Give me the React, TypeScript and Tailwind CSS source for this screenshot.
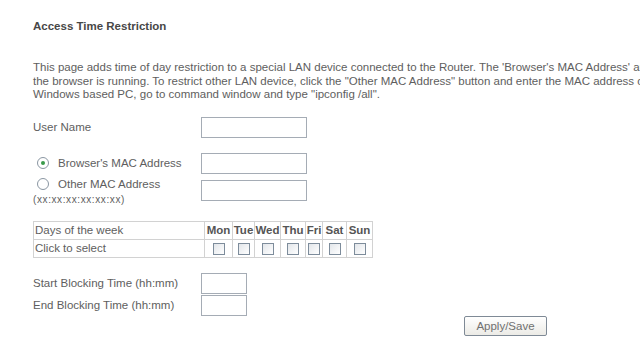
export default function App() {
  const days: [string, number][] = [
    ['Mon', 28],
    ['Tue', 22],
    ['Wed', 26],
    ['Thu', 25],
    ['Fri', 17],
    ['Sat', 24],
    ['Sun', 26],
  ];
  const input = 'h-[21px] border border-[#a5acb5] bg-white';

  return (
    <div
      className="relative h-[360px] w-[640px] overflow-hidden bg-white text-[11.5px] leading-[14px] text-[#5e5e5e]"
      style={{ fontFamily: '"Liberation Sans", Arial, sans-serif' }}
    >
      <div className="pl-[33px] pt-[19px]">
        <h1 className="font-bold text-[#474747]">Access Time Restriction</h1>

        <div className="mt-[28px] whitespace-nowrap leading-[13.5px]">
          <p>
            This page adds time of day restriction to a special LAN device connected to the Router. The 'Browser's MAC
            Address' automatically display the MAC address of the LAN device where
          </p>
          <p>
            the browser is running. To restrict other LAN device, click the "Other MAC Address" button and enter the MAC
            address of the other LAN device. To find out the MAC address of a
          </p>
          <p>Windows based PC, go to command window and type "ipconfig /all".</p>
        </div>

        <div className="mt-[15px] flex items-center">
          <span className="w-[168px]">User Name</span>
          <div className={`${input} w-[106px]`} />
        </div>

        <div className="mt-[15px] flex items-center">
          <label className="flex w-[168px] items-center gap-[9px] pl-[4px]">
            <Radio checked />
            <span>Browser's MAC Address</span>
          </label>
          <div className={`${input} w-[106px]`} />
        </div>

        <div className="mt-[6px] flex items-start">
          <div className="-mt-[3px] w-[168px]">
            <label className="flex items-center gap-[9px] pl-[4px]">
              <Radio />
              <span>Other MAC Address</span>
            </label>
            <div className="mt-[3px] text-[10px] leading-[12px] tracking-[0.6px]">(xx:xx:xx:xx:xx:xx)</div>
          </div>
          <div className={`${input} w-[106px]`} />
        </div>

        <table className="mt-[15px] w-[339px] table-fixed border-collapse border border-[#c4c4c4]">
          <colgroup>
            <col className="w-[171px]" />
            {days.map(([d, w]) => (
              <col key={d} style={{ width: w }} />
            ))}
          </colgroup>
          <tbody>
            <tr className="h-[18px]">
              <td className="border border-[#d2d2d2] px-[1px]">Days of the week</td>
              {days.map(([d]) => (
                <td key={d} className="border border-[#d2d2d2] p-0 text-center font-bold text-[#555]">
                  {d}
                </td>
              ))}
            </tr>
            <tr className="h-[18px]">
              <td className="border border-[#d2d2d2] px-[1px]">Click to select</td>
              {days.map(([d]) => (
                <td key={d} className="border border-[#d2d2d2] p-0 text-center">
                  <span className="inline-block h-[12px] w-[12px] border border-[#7d8c9b] bg-gradient-to-br from-[#e2e6ea] to-white align-middle" />
                </td>
              ))}
            </tr>
          </tbody>
        </table>

        <div className="mt-[15px] flex items-center">
          <span className="w-[168px]">Start Blocking Time (hh:mm)</span>
          <div className={`${input} w-[46px]`} />
        </div>
        <div className="mt-[1px] flex items-center">
          <span className="w-[168px]">End Blocking Time (hh:mm)</span>
          <div className={`${input} w-[46px]`} />
        </div>

        <div className="pl-[431px]">
          <button className="h-[20px] w-[83px] rounded-[2px] border border-[#7f8a96] bg-gradient-to-b from-white to-[#ecebe6] text-[11.5px] text-[#707070]">
            Apply/Save
          </button>
        </div>
      </div>
    </div>
  );
}

function Radio({ checked = false }: { checked?: boolean }) {
  return (
    <span className="inline-flex h-[12px] w-[12px] items-center justify-center rounded-full border border-[#8a96a2] bg-white">
      {checked && <span className="h-[4px] w-[4px] rounded-full bg-[#3a9a4a]" />}
    </span>
  );
}
